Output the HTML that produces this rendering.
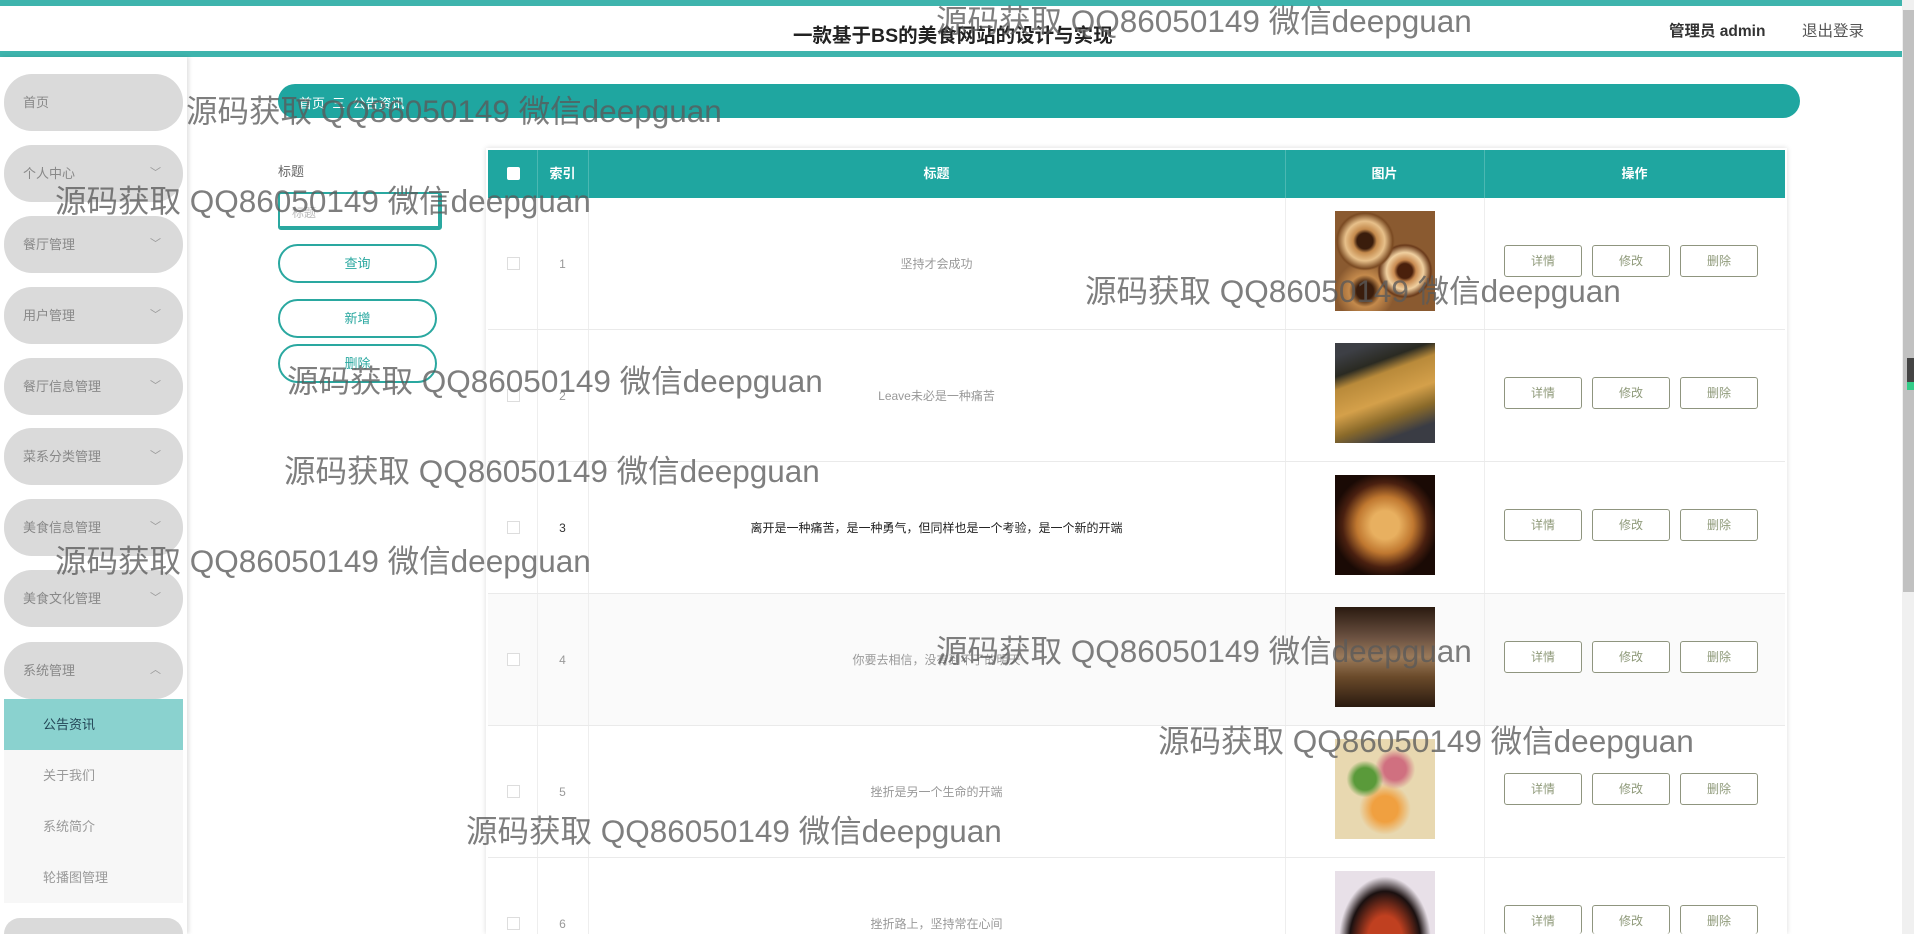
<!DOCTYPE html>
<html style="width:1914px;height:934px;overflow:hidden"><head><meta charset="utf-8">
<style>
*{margin:0;padding:0;box-sizing:border-box}
html,body{width:1914px;height:934px;overflow:hidden}
body{background:#fff;font-family:"Liberation Sans","Noto Sans CJK SC",sans-serif;font-size:13px}
#w{position:relative;width:1914px;height:934px;overflow:hidden}
.a{position:absolute}
.pill{position:absolute;left:4px;width:179px;height:57px;border-radius:28px;background:#dadada;color:#888;font-size:13px;line-height:57px;padding-left:19px}
.pill .ch{position:absolute;right:22px;top:0;font-size:11px;color:#999}
.sub{position:absolute;left:4px;width:179px;height:51px;background:#f7f7f7;color:#999;line-height:51px;padding-left:39px;font-size:13px}
.wm{position:absolute;font-size:31.5px;color:rgba(90,90,90,.78);white-space:nowrap;line-height:1;font-family:"Liberation Sans","Noto Sans CJK SC",sans-serif}
.btn{position:absolute;left:278px;width:159px;height:39px;border:2px solid #2aa8a0;border-radius:20px;color:#2aa8a0;text-align:center;line-height:35px;font-size:13px;background:#fff}
.row{position:absolute;left:488px;width:1297px;height:132px;border-bottom:1px solid #eaeaea}
.row .c{position:absolute;top:0;height:132px;line-height:132px;text-align:center;color:#999;font-size:12px}
.cb{position:absolute;left:19px;top:59px;width:13px;height:13px;border:1px solid #ddd;background:#fff}
.img{position:absolute;left:847px;top:13px;width:100px;height:100px}
.ob{position:absolute;top:47px;width:78px;height:32px;border:1px solid #8f957f;border-radius:3px;color:#8f9a7a;text-align:center;line-height:30px;font-size:12px;background:#fff}
.vl{position:absolute;top:0;width:1px;height:100%;background:#eee}
#r6 .c{height:76px;overflow:hidden}
#r6 .ob{height:29px;border-bottom:0}
</style></head><body><div id="w">
<div class="a" style="left:0;top:0;width:1902px;height:6px;background:#3eb4ad"></div>
<div class="a" style="left:0;top:51px;width:1902px;height:6px;background:#3eb4ad"></div>
<div class="a" style="left:793px;top:19px;font-size:19.5px;font-weight:bold;color:#222">一款基于BS的美食网站的设计与实现</div>
<div class="a" style="left:1669px;top:19px;font-size:15.5px;font-weight:bold;color:#333">管理员 admin</div>
<div class="a" style="left:1802px;top:19px;font-size:15.5px;color:#555">退出登录</div>

<div class="a" style="left:0;top:57px;width:187px;height:877px;background:#fff;box-shadow:2px 0 4px rgba(0,0,0,.12)"></div>
<div class="pill" style="top:74px">首页</div>
<div class="pill" style="top:145px">个人中心<span class="ch">﹀</span></div>
<div class="pill" style="top:216px">餐厅管理<span class="ch">﹀</span></div>
<div class="pill" style="top:287px">用户管理<span class="ch">﹀</span></div>
<div class="pill" style="top:358px">餐厅信息管理<span class="ch">﹀</span></div>
<div class="pill" style="top:428px">菜系分类管理<span class="ch">﹀</span></div>
<div class="pill" style="top:499px">美食信息管理<span class="ch">﹀</span></div>
<div class="pill" style="top:570px">美食文化管理<span class="ch">﹀</span></div>
<div class="pill" style="top:642px">系统管理<span class="ch">︿</span></div>
<div class="sub" style="top:699px;background:#8ad2cf;color:#245">公告资讯</div>
<div class="sub" style="top:750px">关于我们</div>
<div class="sub" style="top:801px">系统简介</div>
<div class="sub" style="top:852px">轮播图管理</div>
<div class="pill" style="top:918px;height:16px;border-radius:28px 28px 0 0"></div>

<div class="a" style="left:278px;top:84px;width:1522px;height:34px;border-radius:17px;background:#1fa6a0"></div>
<div class="a" style="left:299px;top:93px;color:#fff;font-size:13px">首页 &nbsp;三&nbsp; 公告资讯</div>

<div class="a" style="left:278px;top:161px;color:#666;font-size:13px">标题</div>
<div class="a" style="left:278px;top:192px;width:164px;height:38px;border:2px solid #2aa8a0;border-bottom-width:4px;border-right-width:4px;border-radius:3px;color:#bbb;padding:10px 12px;font-size:12px">标题</div>
<div class="btn" style="top:244px">查询</div>
<div class="btn" style="top:299px">新增</div>
<div class="btn" style="top:344px">删除</div>

<div class="a" style="left:486px;top:148px;width:1301px;height:786px;box-shadow:0 0 5px rgba(0,0,0,.15)"></div>
<div class="a" style="left:488px;top:150px;width:1297px;height:48px;background:#1fa6a0;color:#fff;font-size:13px;font-weight:bold;line-height:48px">
 <div class="a" style="left:19px;top:17px;width:13px;height:13px;background:#fff;border-radius:2px"></div>
 <div class="a" style="left:49px;width:51px;text-align:center">索引</div>
 <div class="a" style="left:100px;width:697px;text-align:center">标题</div>
 <div class="a" style="left:797px;width:199px;text-align:center">图片</div>
 <div class="a" style="left:996px;width:301px;text-align:center">操作</div>
 <div class="vl" style="left:49px;background:#4bb8b2"></div><div class="vl" style="left:100px;background:#4bb8b2"></div><div class="vl" style="left:797px;background:#4bb8b2"></div><div class="vl" style="left:996px;background:#4bb8b2"></div>
</div>

<div class="a" style="left:488px;top:198px;width:1297px;height:736px;background:#fff"></div>
<div class="row" style="top:198px">
 <div class="vl" style="left:49px"></div><div class="vl" style="left:100px"></div><div class="vl" style="left:797px"></div><div class="vl" style="left:996px"></div>
 <div class="cb"></div><div class="c" style="left:49px;width:51px">1</div><div class="c" style="left:100px;width:697px">坚持才会成功</div>
 <div class="img" style="background:radial-gradient(circle at 30% 30%,#3a1d0c 8%,#c48a4c 12%,#e7c08a 20%,#7a4a22 28%,transparent 30%),radial-gradient(circle at 70% 60%,#4a200c 8%,#c88a50 12%,#f0d0a0 20%,#6a3a1a 28%,transparent 30%),radial-gradient(circle at 30% 80%,#3a1d0c 8%,#c48a4c 15%,#8a5a30 28%),#5a3418"></div>
 <div class="ob" style="left:1016px">详情</div><div class="ob" style="left:1104px">修改</div><div class="ob" style="left:1192px">删除</div>
</div>
<div class="row" style="top:330px">
 <div class="vl" style="left:49px"></div><div class="vl" style="left:100px"></div><div class="vl" style="left:797px"></div><div class="vl" style="left:996px"></div>
 <div class="cb"></div><div class="c" style="left:49px;width:51px">2</div><div class="c" style="left:100px;width:697px">Leave未必是一种痛苦</div>
 <div class="img" style="background:linear-gradient(160deg,#3d3f45 10%,#2a2a22 25%,#b98a3a 35%,#d4a04a 55%,#8a6a2a 70%,#3a3c44 85%)"></div>
 <div class="ob" style="left:1016px">详情</div><div class="ob" style="left:1104px">修改</div><div class="ob" style="left:1192px">删除</div>
</div>
<div class="row" style="top:462px">
 <div class="vl" style="left:49px"></div><div class="vl" style="left:100px"></div><div class="vl" style="left:797px"></div><div class="vl" style="left:996px"></div>
 <div class="cb"></div><div class="c" style="left:49px;width:51px;color:#333">3</div><div class="c" style="left:100px;width:697px;color:#222">离开是一种痛苦，是一种勇气，但同样也是一个考验，是一个新的开端</div>
 <div class="img" style="background:radial-gradient(ellipse at 50% 50%,#e8b060 20%,#c07830 40%,#4a2010 60%,#1a0a05 75%)"></div>
 <div class="ob" style="left:1016px">详情</div><div class="ob" style="left:1104px">修改</div><div class="ob" style="left:1192px">删除</div>
</div>
<div class="row" style="top:594px;background:#fafafa">
 <div class="vl" style="left:49px"></div><div class="vl" style="left:100px"></div><div class="vl" style="left:797px"></div><div class="vl" style="left:996px"></div>
 <div class="cb"></div><div class="c" style="left:49px;width:51px">4</div><div class="c" style="left:100px;width:697px">你要去相信，没有到不了的明天</div>
 <div class="img" style="background:linear-gradient(180deg,#2a1a10 0%,#6a5040 30%,#9a7a5a 50%,#6a4a2a 70%,#2a1a10 100%)"></div>
 <div class="ob" style="left:1016px">详情</div><div class="ob" style="left:1104px">修改</div><div class="ob" style="left:1192px">删除</div>
</div>
<div class="row" style="top:726px">
 <div class="vl" style="left:49px"></div><div class="vl" style="left:100px"></div><div class="vl" style="left:797px"></div><div class="vl" style="left:996px"></div>
 <div class="cb"></div><div class="c" style="left:49px;width:51px">5</div><div class="c" style="left:100px;width:697px">挫折是另一个生命的开端</div>
 <div class="img" style="background:radial-gradient(circle at 30% 40%,#5a9a3a 12%,transparent 20%),radial-gradient(circle at 60% 30%,#d07080 12%,transparent 22%),radial-gradient(circle at 50% 70%,#f0a040 15%,transparent 30%),#e8d8b0"></div>
 <div class="ob" style="left:1016px">详情</div><div class="ob" style="left:1104px">修改</div><div class="ob" style="left:1192px">删除</div>
</div>
<div class="row" id="r6" style="top:858px;height:76px;border-bottom:0;overflow:hidden">
 <div class="vl" style="left:49px"></div><div class="vl" style="left:100px"></div><div class="vl" style="left:797px"></div><div class="vl" style="left:996px"></div>
 <div class="cb"></div><div class="c" style="left:49px;width:51px">6</div><div class="c" style="left:100px;width:697px">挫折路上，坚持常在心间</div>
 <div class="img" style="height:63px;background:radial-gradient(ellipse at 50% 110%,#c04020 25%,#1a1010 50%,#e8e0e8 65%)"></div>
 <div class="ob" style="left:1016px">详情</div><div class="ob" style="left:1104px">修改</div><div class="ob" style="left:1192px">删除</div>
</div>

<div class="a" style="left:1902px;top:0;width:12px;height:934px;background:#f0f0f0"></div>
<div class="a" style="left:1903px;top:10px;width:11px;height:582px;background:#c1c1c1"></div>
<div class="a" style="left:1907px;top:358px;width:7px;height:32px;background:#444;border-bottom:8px solid #3c8"></div>

<div class="wm" style="left:936px;top:6px">源码获取 QQ86050149 微信deepguan</div>
<div class="wm" style="left:186px;top:96px">源码获取 QQ86050149 微信deepguan</div>
<div class="wm" style="left:55px;top:186px">源码获取 QQ86050149 微信deepguan</div>
<div class="wm" style="left:1085px;top:276px">源码获取 QQ86050149 微信deepguan</div>
<div class="wm" style="left:287px;top:366px">源码获取 QQ86050149 微信deepguan</div>
<div class="wm" style="left:284px;top:456px">源码获取 QQ86050149 微信deepguan</div>
<div class="wm" style="left:55px;top:546px">源码获取 QQ86050149 微信deepguan</div>
<div class="wm" style="left:936px;top:636px">源码获取 QQ86050149 微信deepguan</div>
<div class="wm" style="left:1158px;top:726px">源码获取 QQ86050149 微信deepguan</div>
<div class="wm" style="left:466px;top:816px">源码获取 QQ86050149 微信deepguan</div>
</div></body></html>
